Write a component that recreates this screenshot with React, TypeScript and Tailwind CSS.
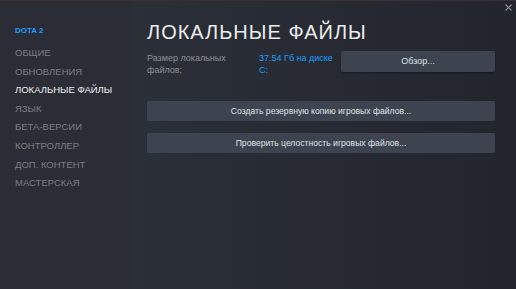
const menu = [
  'ОБЩИЕ',
  'ОБНОВЛЕНИЯ',
  'ЛОКАЛЬНЫЕ ФАЙЛЫ',
  'ЯЗЫК',
  'БЕТА-ВЕРСИИ',
  'КОНТРОЛЛЕР',
  'ДОП. КОНТЕНТ',
  'МАСТЕРСКАЯ',
];

export default function App() {
  return (
    <div
      className="relative flex h-[289px] w-[516px] overflow-hidden border-t border-[#3a2f33] bg-[#24272e]"
      style={{ fontFamily: '"Liberation Sans", Arial, sans-serif' }}
    >
      {/* sidebar */}
      <aside className="flex w-[132px] shrink-0 flex-col bg-[#2a2d35] pl-[15px] pt-[24px]">
        <div className="text-[8px] font-bold leading-[12px] text-[#1a9fff]">DOTA 2</div>
        <nav className="mt-[7px] flex flex-col">
          {menu.map((item) => (
            <div
              key={item}
              className={
                item === 'ЛОКАЛЬНЫЕ ФАЙЛЫ'
                  ? 'text-[9.5px] leading-[18.6px] text-[#f0f0f0]'
                  : 'text-[9.5px] leading-[18.6px] text-[#7a7e84]'
              }
            >
              {item}
            </div>
          ))}
        </nav>
      </aside>

      {/* main */}
      <main className="flex-1 bg-gradient-to-r from-[#2b2f38] to-[#22252c] pl-[15px] pr-[21px] pt-[19px]">
        <h1 className="text-[20px] font-normal leading-[24px] tracking-[1px] text-[#ececec]">
          ЛОКАЛЬНЫЕ ФАЙЛЫ
        </h1>
        <div className="mt-[7px] flex items-start">
          <div className="w-[112px] pt-[1px] text-[9px] leading-[12px] text-[#8f9298]">
            Размер локальных файлов:
          </div>
          <div className="w-[78px] pt-[1px] text-[9px] leading-[12px] text-[#1a9fff]">
            37.54 Гб на диске C:
          </div>
          <button className="ml-auto h-[21px] w-[154px] rounded-[2px] bg-[#3d4450] text-[9px] text-[#dfe3e6] shadow-[0_1px_2px_rgba(0,0,0,0.4)]">
            Обзор...
          </button>
        </div>
        <div className="mt-[25px] flex flex-col gap-[12px]">
          <button className="h-[20px] w-full rounded-[2px] bg-[#3d4450] text-[8.6px] text-[#dfe3e6]">
            Создать резервную копию игровых файлов...
          </button>
          <button className="h-[20px] w-full rounded-[2px] bg-[#3d4450] text-[8.6px] text-[#dfe3e6]">
            Проверить целостность игровых файлов...
          </button>
        </div>
      </main>

      {/* close */}
      <svg className="absolute right-[4px] top-[3px]" width="7" height="7" viewBox="0 0 7 7">
        <path d="M0.5 0.5L6.5 6.5M6.5 0.5L0.5 6.5" stroke="#8a8d92" strokeWidth="1.2" />
      </svg>
    </div>
  );
}
